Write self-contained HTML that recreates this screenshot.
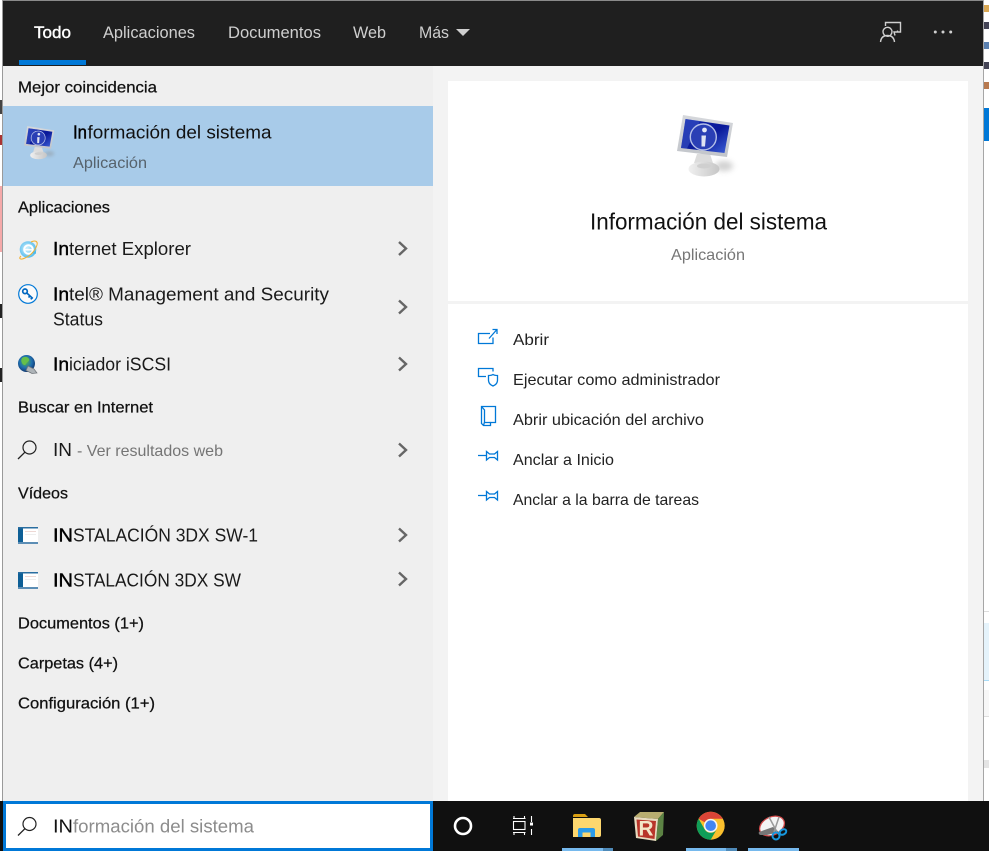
<!DOCTYPE html>
<html lang="es">
<head>
<meta charset="utf-8">
<title>Búsqueda</title>
<style>
html,body{margin:0;padding:0;background:#fff;width:989px;height:851px;overflow:hidden}
svg{display:block}
text{font-family:"Liberation Sans",sans-serif;font-size:18px;fill:#1a1a1a}
.h{font-size:16px;fill:#111;stroke:#111;stroke-width:.25px}
.b{stroke:#000;stroke-width:.4px;fill:#000}
.t{font-size:16.5px;fill:#cfcfcf}
.a{font-size:16px;fill:#222}
.chev{fill:none;stroke:#666;stroke-width:2.4}
.act{fill:none;stroke:#0078d7;stroke-width:1.3}
</style>
</head>
<body>
<svg width="989" height="851" viewBox="0 0 989 851" xmlns="http://www.w3.org/2000/svg">
<defs>
<linearGradient id="scr" x1="0" y1="0" x2="1" y2="1"><stop offset="0" stop-color="#0a1fa8"/><stop offset=".55" stop-color="#0a1a9a"/><stop offset="1" stop-color="#3f62d8"/></linearGradient>
<linearGradient id="frm" x1="0" y1="0" x2="0" y2="1"><stop offset="0" stop-color="#d6d8dc"/><stop offset="1" stop-color="#c2c5ca"/></linearGradient>
<linearGradient id="std" x1="0" y1="0" x2="1" y2="0"><stop offset="0" stop-color="#f0f0f0"/><stop offset="1" stop-color="#c6c6c6"/></linearGradient>
<radialGradient id="ieg" cx=".45" cy=".45" r=".6"><stop offset="0" stop-color="#d4f2fd"/><stop offset="1" stop-color="#4db8ec"/></radialGradient>
<radialGradient id="glb" cx=".45" cy=".4" r=".6"><stop offset="0" stop-color="#58b848"/><stop offset=".6" stop-color="#206fb0"/><stop offset="1" stop-color="#123a70"/></radialGradient>
<filter id="bl" x="-60%" y="-60%" width="220%" height="220%"><feGaussianBlur stdDeviation="3"/></filter>
<g id="mon">
<ellipse cx="84" cy="66" rx="9" ry="5" fill="#8a8a8a" opacity=".4" filter="url(#bl)"/>
<path d="M57 54h13l3 9H54z" fill="#dcdcdc"/>
<ellipse cx="64" cy="69" rx="15.500" ry="7.500" fill="url(#std)"/>
<ellipse cx="64" cy="66" rx="7" ry="2.500" fill="#cfcfcf"/>
<polygon points="43,15 93,23 87,57 37,51" fill="url(#frm)"/>
<polygon points="45.500,19 89.500,25.500 84.500,53 41,48" fill="url(#scr)"/>
<polygon points="45.500,19 60,21 47,48.500 41,48" fill="#5f7fe0" opacity=".35"/>
<circle cx="63.300" cy="37" r="13" fill="#2a3fb5" stroke="#b5c0e8" stroke-width="1.400"/>
<circle cx="64.500" cy="30" r="2.400" fill="#e4e8f6"/>
<path d="M61.500 35.500h4.500l-1 11h-3.500z" fill="#dfe3f2"/>
</g>
<g id="vid">
<rect x="0" y="0" width="20" height="17" fill="#fff"/>
<rect x="0" y="0" width="5" height="17" fill="#0e5f96"/>
<rect x="0" y="0" width="20" height="1.500" fill="#2a6ea0"/>
<rect x="0" y="15" width="20" height="2" fill="#5c8eb5"/>
<rect x="7" y="4" width="11" height="1" fill="#eed8d4"/>
<rect x="7" y="7" width="11" height="1" fill="#eee"/>
</g>
<g id="pin" class="act">
<path d="M478 455.500h8M486.500 451.500l3 2.500h5l3-2.500v8.500l-3-2.500h-5l-3 2.500z"/>
</g>
</defs>

<!-- background fragments -->
<rect width="989" height="851" fill="#fff"/>
<rect x="0" y="186" width="2" height="66" fill="#f5a9a9"/>
<rect x="0" y="304" width="2" height="14" fill="#222"/>
<rect x="0" y="368" width="2" height="14" fill="#222"/>
<rect x="0" y="100" width="2" height="14" fill="#444"/>
<rect x="0" y="135" width="2" height="10" fill="#a33"/>
<rect x="984" y="5" width="5" height="7" fill="#d9a855"/>
<rect x="984" y="22" width="5" height="7" fill="#445"/>
<rect x="984" y="42" width="5" height="7" fill="#5a80b0"/>
<rect x="984" y="62" width="5" height="7" fill="#445"/>
<rect x="984" y="82" width="5" height="7" fill="#b87a50"/>
<rect x="984" y="108" width="5" height="33" fill="#0078d7"/>
<rect x="984" y="611" width="5" height="1" fill="#ddd"/>
<rect x="984" y="623" width="5" height="58" fill="#e5f3fb"/>
<rect x="984" y="680" width="5" height="1" fill="#a9dcf7"/>
<rect x="984" y="690" width="5" height="26" fill="#f7f7f7"/>
<rect x="984" y="716" width="5" height="1" fill="#ddd"/>
<rect x="984" y="760" width="5" height="8" fill="#e4e4e4"/>
<rect x="2" y="0" width="982" height="1" fill="#8a8a8a"/>
<rect x="2" y="0" width="1" height="801" fill="#9a9a9a"/>
<rect x="983" y="0" width="1" height="801" fill="#a6a6a6"/>

<!-- panels -->
<rect x="3" y="1" width="980" height="65" fill="#1f1f1f"/>
<rect x="3" y="66" width="430" height="735" fill="#efefef"/>
<rect x="433" y="66" width="550" height="735" fill="#f3f3f3"/>
<rect x="448" y="81" width="520" height="720" fill="#fff"/>
<rect x="448" y="301" width="520" height="3" fill="#f3f3f3"/>
<rect x="3" y="106" width="430" height="80" fill="#a8cbe9"/>

<!-- header -->
<text class="t" x="34" y="38" textLength="37" lengthAdjust="spacingAndGlyphs" style="fill:#fff;stroke:#fff;stroke-width:.4px">Todo</text>
<text class="t" x="103" y="38" textLength="92" lengthAdjust="spacingAndGlyphs">Aplicaciones</text>
<text class="t" x="228" y="38" textLength="93" lengthAdjust="spacingAndGlyphs">Documentos</text>
<text class="t" x="353" y="38" textLength="33" lengthAdjust="spacingAndGlyphs">Web</text>
<text class="t" x="419" y="38" textLength="30" lengthAdjust="spacingAndGlyphs">Más</text>
<path d="M456 29h14l-7 7z" fill="#cfcfcf"/>
<rect x="19" y="60" width="67" height="5" fill="#0078d7"/>
<g fill="none" stroke="#d0d0d0" stroke-width="1.400">
<circle cx="887.500" cy="31.800" r="4.500"/>
<path d="M880.500 42c.5-4.500 3-6.500 7-6.500s6.500 2 7 6.500"/>
<path d="M885.500 26v-3.500h15v9.500h-3v-1.500M897.500 32l-3.500 0 1 3.500"/>
</g>
<circle cx="935.300" cy="32" r="1.500" fill="#d0d0d0"/>
<circle cx="943" cy="32" r="1.500" fill="#d0d0d0"/>
<circle cx="950.700" cy="32" r="1.500" fill="#d0d0d0"/>

<!-- left list -->
<text class="h" x="18" y="92.500" textLength="139" lengthAdjust="spacingAndGlyphs">Mejor coincidencia</text>
<use href="#mon" transform="translate(4 118) scale(.54)"/>
<text class="b" x="73" y="138.500" textLength="14" lengthAdjust="spacingAndGlyphs">In</text>
<text x="87.500" y="138.500" textLength="184" lengthAdjust="spacingAndGlyphs" style="fill:#111">formación del sistema</text>
<text x="73" y="168" textLength="74" lengthAdjust="spacingAndGlyphs" style="font-size:16px;fill:#56626c">Aplicación</text>

<text class="h" x="18" y="212.500" textLength="92" lengthAdjust="spacingAndGlyphs">Aplicaciones</text>

<!-- IE -->
<circle cx="28" cy="249.500" r="8.300" fill="url(#ieg)"/>
<circle cx="28.500" cy="249.500" r="4.300" fill="none" stroke="#fff" stroke-width="2"/>
<path d="M24 249.800h9" stroke="#fff" stroke-width="1.400"/>
<path d="M33 252.500h3" stroke="#4db8ec" stroke-width="2.500"/>
<path d="M21 256c-3 3 0 4 4 2 5-2 10-7 12-13 1-4-2-5-6-3" fill="none" stroke="#f0b030" stroke-width="1"/>
<text class="b" x="53" y="255" textLength="16" lengthAdjust="spacingAndGlyphs">In</text>
<text x="69" y="255" textLength="122" lengthAdjust="spacingAndGlyphs">ternet Explorer</text>

<!-- Intel -->
<circle cx="28" cy="294" r="9.300" fill="#fafafa" stroke="#0078d7" stroke-width="1.200"/>
<circle cx="25" cy="291.300" r="2.300" fill="none" stroke="#0067c0" stroke-width="1.700"/>
<path d="M26.800 293l6 5.500M30 296l-1.500 1.500M32 298l-1.300 1.300" fill="none" stroke="#0067c0" stroke-width="1.600"/>
<text class="b" x="53" y="300.500" textLength="16" lengthAdjust="spacingAndGlyphs">In</text>
<text x="69" y="300.500" textLength="260" lengthAdjust="spacingAndGlyphs">tel® Management and Security</text>
<text x="53" y="325.500" textLength="50" lengthAdjust="spacingAndGlyphs">Status</text>

<!-- iSCSI -->
<circle cx="26.500" cy="363.500" r="8.500" fill="url(#glb)"/>
<path d="M22 358c3-2 6-1 7 1s-2 3-3 5-3 1-4-1-1-3 0-5z" fill="#66c04a"/>
<path d="M28 366l6 3 3 4-5 .5-6-3z" fill="#aeb4b8" stroke="#6d7378" stroke-width=".7"/>
<text class="b" x="53" y="370.500" textLength="16" lengthAdjust="spacingAndGlyphs">In</text>
<text x="69" y="370.500" textLength="102" lengthAdjust="spacingAndGlyphs">iciador iSCSI</text>

<text class="h" x="18" y="412.500" textLength="135" lengthAdjust="spacingAndGlyphs">Buscar en Internet</text>
<circle cx="29.500" cy="447.500" r="6.500" fill="none" stroke="#222" stroke-width="1.200"/>
<path d="M24.800 452.300L18 459" stroke="#222" stroke-width="1.300" fill="none"/>
<text x="53" y="456" textLength="19" lengthAdjust="spacingAndGlyphs">IN</text>
<text x="77" y="456" textLength="146" lengthAdjust="spacingAndGlyphs" style="font-size:16px;fill:#757575">- Ver resultados web</text>

<text class="h" x="18" y="498.500" textLength="50" lengthAdjust="spacingAndGlyphs">Vídeos</text>
<use href="#vid" transform="translate(18 527)"/>
<text class="b" x="53" y="541.500" textLength="20" lengthAdjust="spacingAndGlyphs">IN</text>
<text x="73" y="541.500" textLength="185" lengthAdjust="spacingAndGlyphs">STALACIÓN 3DX SW-1</text>
<use href="#vid" transform="translate(18 572)"/>
<text class="b" x="53" y="586.500" textLength="20" lengthAdjust="spacingAndGlyphs">IN</text>
<text x="73" y="586.500" textLength="168" lengthAdjust="spacingAndGlyphs">STALACIÓN 3DX SW</text>

<text class="h" x="18" y="628.500" textLength="126" lengthAdjust="spacingAndGlyphs">Documentos (1+)</text>
<text class="h" x="18" y="668.500" textLength="100" lengthAdjust="spacingAndGlyphs">Carpetas (4+)</text>
<text class="h" x="18" y="708.500" textLength="137" lengthAdjust="spacingAndGlyphs">Configuración (1+)</text>

<g class="chev">
<path d="M399 242l7 6.500-7 6.500"/>
<path d="M399 300.500l7 6.500-7 6.500"/>
<path d="M399 357.500l7 6.500-7 6.500"/>
<path d="M399 443.500l7 6.500-7 6.500"/>
<path d="M399 528.500l7 6.500-7 6.500"/>
<path d="M399 572.500l7 6.500-7 6.500"/>
</g>

<!-- right preview -->
<use href="#mon" transform="translate(640 100)"/>
<text x="590" y="229.500" textLength="237" lengthAdjust="spacingAndGlyphs" style="font-size:23.500px;fill:#111">Información del sistema</text>
<text x="671" y="260" textLength="74" lengthAdjust="spacingAndGlyphs" style="font-size:16px;fill:#767676">Aplicación</text>

<!-- actions -->
<g class="act">
<path d="M490 333.500h-11.500v10h14.500v-6"/>
<path d="M489 338.500l7.500-8.500M492.500 329.500h4.500v4.500"/>
<path d="M486 376.500h-7.500v-8h14.500v3"/>
<path d="M488.500 375.500c3 0 4.500-1 4.500-1s1.500 1 4.500 1v4.500c0 3-2 5-4.500 6-2.500-1-4.500-3-4.500-6z"/>
<path d="M481.500 406.500h14v16h-5v3h-7l-2-2z"/>
<path d="M481.500 406.500l3 3.500v12l-1 3.500M490.500 422.500h-6"/>
</g>
<use href="#pin"/>
<use href="#pin" transform="translate(0 40)"/>
<text class="a" x="513" y="345" textLength="36" lengthAdjust="spacingAndGlyphs">Abrir</text>
<text class="a" x="513" y="385" textLength="207" lengthAdjust="spacingAndGlyphs">Ejecutar como administrador</text>
<text class="a" x="513" y="425" textLength="191" lengthAdjust="spacingAndGlyphs">Abrir ubicación del archivo</text>
<text class="a" x="513" y="465" textLength="101" lengthAdjust="spacingAndGlyphs">Anclar a Inicio</text>
<text class="a" x="513" y="505" textLength="186" lengthAdjust="spacingAndGlyphs">Anclar a la barra de tareas</text>

<!-- taskbar -->
<rect x="0" y="801" width="989" height="50" fill="#101010"/>
<rect x="4.500" y="802.500" width="427" height="47" fill="#fff" stroke="#0078d7" stroke-width="3"/>
<circle cx="29.500" cy="824" r="6.500" fill="none" stroke="#222" stroke-width="1.200"/>
<path d="M24.800 828.800L18 835.500" stroke="#222" stroke-width="1.300" fill="none"/>
<text x="53" y="832.500" textLength="20" lengthAdjust="spacingAndGlyphs" style="fill:#111">IN</text>
<text x="73" y="832.500" textLength="181" lengthAdjust="spacingAndGlyphs" style="fill:#8c8c8c">formación del sistema</text>

<circle cx="463" cy="826" r="8" fill="none" stroke="#fff" stroke-width="2.600"/>

<g fill="none" stroke="#fff" stroke-width="1.100">
<path d="M513 818.500h12.500M514 816v2.500M524.500 816v2.500"/>
<rect x="513.500" y="821.500" width="11.500" height="8"/>
<path d="M513 832.500h12.500M514 832.500v2.500M524.500 832.500v2.500"/>
<path d="M531.500 816v6M531.500 829v6"/>
</g>
<rect x="530" y="822.500" width="3" height="3" fill="#fff"/>

<!-- folder -->
<path d="M573 816a2 2 0 0 1 2-2h10l3 3h-15z" fill="#d99f12"/>
<path d="M573 818h26a2 2 0 0 1 2 2v15a2 2 0 0 1-2 2h-26z" fill="#fdd76e"/>
<path d="M578 837v-7a2 2 0 0 1 2-2h13a2 2 0 0 1 2 2v7h-4.500v-4.500h-8v4.500z" fill="#2b9be8"/>

<!-- R block -->
<polygon points="634,817 658,819 664,812 640,812" fill="#b8ad70"/>
<polygon points="658,819 664,812 663,835 656,841" fill="#5c8344"/>
<polygon points="634,817 658,819 656,841 636,838" fill="#e8dcc0"/>
<polygon points="636.500,819.500 656,821 654.500,839 638,836.500" fill="#b8352a"/>
<text x="638.500" y="835.500" textLength="15" lengthAdjust="spacingAndGlyphs" style="font-size:21px;font-weight:bold;fill:#f3e6c8">R</text>

<!-- Chrome -->
<circle cx="710.700" cy="825.700" r="14" fill="#fbc02d"/>
<path d="M698.600 818.700A14 14 0 0 1 722.800 818.700H710.700A7 7 0 0 0 704.600 822.200z" fill="#db4437"/>
<path d="M698.600 818.700A14 14 0 0 0 710.700 839.700L716.800 829.200A7 7 0 0 1 704.600 829.200z" fill="#0f9d58"/>
<circle cx="710.700" cy="825.700" r="6.800" fill="#f5f5f5"/>
<circle cx="710.700" cy="825.700" r="5.300" fill="#4285f4"/>

<!-- Snipping tool -->
<ellipse cx="772" cy="826" rx="13" ry="9" transform="rotate(-25 772 826)" fill="#f4f4f4" stroke="#d14a4a" stroke-width="1.300"/>
<path d="M759 832l14-5 6 5-12 3h-6a2 2 0 0 1-2-3z" fill="#777"/>
<path d="M769 817l8 15M779 817l-5 15" stroke="#999" stroke-width="1.500" fill="none"/>
<circle cx="776" cy="836" r="3.500" fill="none" stroke="#1797dd" stroke-width="2"/>
<ellipse cx="783" cy="832" rx="3.500" ry="2.500" transform="rotate(-30 783 832)" fill="none" stroke="#1797dd" stroke-width="2"/>

<!-- running indicators -->
<rect x="562" y="848" width="41" height="3" fill="#76b9ed"/>
<rect x="603" y="848" width="10" height="3" fill="#4f8ab8"/>
<rect x="686" y="848" width="40" height="3" fill="#76b9ed"/>
<rect x="726" y="848" width="11" height="3" fill="#4f8ab8"/>
<rect x="748" y="848" width="51" height="3" fill="#76b9ed"/>
</svg>
</body>
</html>
